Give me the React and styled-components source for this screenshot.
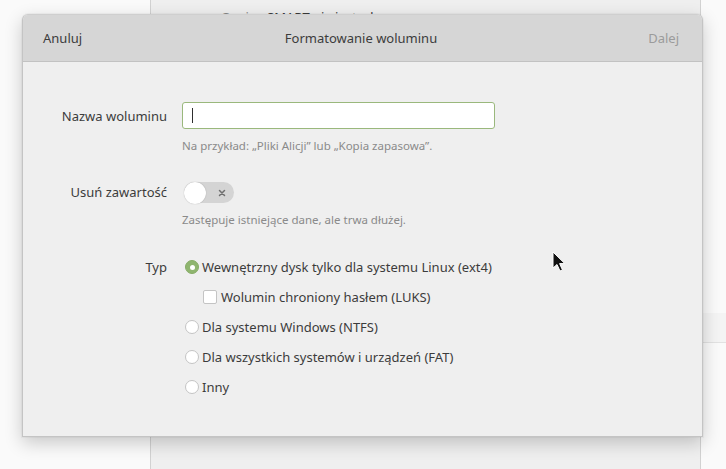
import React from "react";
import styled, { createGlobalStyle } from "styled-components";

const Global = createGlobalStyle`
  html, body { margin: 0; padding: 0; }
  body {
    width: 726px; height: 469px; overflow: hidden;
    background: #fafafa;
    font-family: "Noto Sans", "Open Sans", sans-serif;
    color: #3c3c3c;
  }
`;

const Desktop = styled.div`
  position: relative;
  width: 726px;
  height: 469px;
  overflow: hidden;
  background: #fafafa;
`;

const ParentWindow = styled.div`
  position: absolute;
  left: 150px;
  top: -40px;
  width: 551px;
  height: 540px;
  background: #efefef;
  border-left: 1px solid #d2d2d2;
  border-right: 1px solid #d2d2d2;
  padding: 48px 0 0 70px;
  box-sizing: border-box;
  font-size: 13px;
`;

const ParentLine = styled.div`
  display: flex;
  gap: 11px;
  line-height: 18px;
`;

const ParentKey = styled.span`
  color: #8a8a8a;
`;

const SideBand = styled.div`
  position: absolute;
  left: 701px;
  top: 313px;
  width: 30px;
  height: 29px;
  background: #f4f4f4;
  border-bottom: 1px solid #e2e2e2;
`;

const Dialog = styled.div`
  position: absolute;
  left: 22px;
  top: 14px;
  width: 681px;
  height: 423px;
  background: #efefef;
  border: 1px solid #c4c4c4;
  border-top-color: #cfcfcf;
  border-radius: 6px 6px 0 0;
  box-sizing: border-box;
  box-shadow: 0 6px 18px rgba(0, 0, 0, 0.2), 0 0 0 1px rgba(0,0,0,0.03);
  display: flex;
  flex-direction: column;
  overflow: hidden;
`;

const Header = styled.div`
  height: 47px;
  flex: none;
  background: #d6d6d6;
  border-bottom: 1px solid #c2c2c2;
  display: grid;
  grid-template-columns: 1fr auto 1fr;
  align-items: center;
  padding: 0 23px 0 20px;
  font-size: 13px;
  box-sizing: border-box;
`;

const HeaderButton = styled.span`
  color: ${(p) => (p.$disabled ? "#9b9b9b" : "#3c3c3c")};
  justify-self: ${(p) => (p.$end ? "end" : "start")};
`;

const Title = styled.span`
  color: #3c3c3c;
  justify-self: center;
`;

const Body = styled.div`
  padding-top: 40px;
  display: grid;
  grid-template-columns: 144px 1fr;
  column-gap: 15px;
  align-items: center;
  font-size: 13px;
`;

const Label = styled.div`
  text-align: right;
  color: #3c3c3c;
  margin-top: ${(p) => p.$mt || 0}px;
  align-self: ${(p) => (p.$top ? "start" : "center")};
  line-height: 20px;
`;

const Cell = styled.div`
  margin-top: ${(p) => p.$mt || 0}px;
`;

const Input = styled.div`
  width: 313px;
  height: 27px;
  box-sizing: border-box;
  background: #ffffff;
  border: 1px solid #9ab87c;
  border-radius: 3px;
  display: flex;
  align-items: center;
  padding-left: 9px;
`;

const Caret = styled.span`
  width: 1px;
  height: 15px;
  background: #2e2e2e;
`;

const Hint = styled.div`
  grid-column: 2;
  font-size: 11.5px;
  color: #8a8a8a;
  line-height: 15px;
  margin-top: ${(p) => p.$mt || 0}px;
`;

const Switch = styled.div`
  width: 50px;
  height: 21px;
  border-radius: 11px;
  background: #d4d4d4;
  position: relative;
  margin-left: 2px;
  margin-top: 1px;
`;

const Knob = styled.span`
  position: absolute;
  left: 0;
  top: -0.5px;
  width: 22px;
  height: 22px;
  border-radius: 50%;
  background: #ffffff;
  box-shadow: 0 0 1px rgba(0,0,0,0.35);
`;

const Cross = styled.svg`
  position: absolute;
  right: 8px;
  top: 7px;
`;

const Options = styled.div`
  display: flex;
  flex-direction: column;
`;

const Option = styled.div`
  display: flex;
  align-items: center;
  height: 20px;
  gap: 3px;
  margin-left: ${(p) => p.$indent || 3}px;
  margin-bottom: 10px;
  color: #3c3c3c;
`;

const Radio = styled.span`
  width: 14px;
  height: 14px;
  box-sizing: border-box;
  border-radius: 50%;
  flex: none;
  background: ${(p) => (p.$on ? "#8fb56f" : "#ffffff")};
  border: 1px solid ${(p) => (p.$on ? "#86ac66" : "#c4c4c4")};
  display: flex;
  align-items: center;
  justify-content: center;
  &::after {
    content: "";
    display: ${(p) => (p.$on ? "block" : "none")};
    width: 5px;
    height: 5px;
    border-radius: 50%;
    background: #ffffff;
  }
`;

const Check = styled.span`
  width: 14px;
  height: 14px;
  box-sizing: border-box;
  border-radius: 2px;
  flex: none;
  background: #ffffff;
  border: 1px solid #c4c4c4;
  margin-right: 1px;
`;

const Cursor = styled.svg`
  position: absolute;
  left: 552px;
  top: 251px;
`;

export default function App() {
  const types = [
    { label: "Wewnętrzny dysk tylko dla systemu Linux (ext4)", on: true },
    { label: "Wolumin chroniony hasłem (LUKS)", check: true },
    { label: "Dla systemu Windows (NTFS)" },
    { label: "Dla wszystkich systemów i urządzeń (FAT)" },
    { label: "Inny" },
  ];
  return (
    <>
      <Global />
      <Desktop>
        <ParentWindow>
          <ParentLine>
            <ParentKey>Opcje</ParentKey>
            <span>SMART nie jest włączone</span>
          </ParentLine>
        </ParentWindow>
        <SideBand />
        <Dialog>
          <Header>
            <HeaderButton>Anuluj</HeaderButton>
            <Title>Formatowanie woluminu</Title>
            <HeaderButton $end $disabled>Dalej</HeaderButton>
          </Header>
          <Body>
            <Label>Nazwa woluminu</Label>
            <Cell>
              <Input>
                <Caret />
              </Input>
            </Cell>
            <Hint $mt={9}>Na przykład: „Pliki Alicji” lub „Kopia zapasowa”.</Hint>

            <Label $mt={28}>Usuń zawartość</Label>
            <Cell $mt={28}>
              <Switch>
                <Knob />
                <Cross width="8" height="8" viewBox="0 0 8 8">
                  <path d="M1.5 1.5 L6.5 6.5 M6.5 1.5 L1.5 6.5" stroke="#6e6e6e" strokeWidth="1.5" strokeLinecap="round" />
                </Cross>
              </Switch>
            </Cell>
            <Hint $mt={9}>Zastępuje istniejące dane, ale trwa dłużej.</Hint>

            <Label $mt={30} $top>Typ</Label>
            <Cell $mt={30}>
              <Options>
                {types.map((t) => (
                  <Option key={t.label} $indent={t.check ? 21 : 3}>
                    {t.check ? <Check /> : <Radio $on={t.on} />}
                    <span>{t.label}</span>
                  </Option>
                ))}
              </Options>
            </Cell>
          </Body>
        </Dialog>
        <Cursor width="14" height="22" viewBox="0 0 14 22">
          <path d="M1 1 L1 17 L5 13.5 L8 20 L10.5 19 L7.6 12.6 L12.8 12.6 Z" fill="#111" stroke="#fff" strokeWidth="1" strokeLinejoin="round" />
        </Cursor>
      </Desktop>
    </>
  );
}
